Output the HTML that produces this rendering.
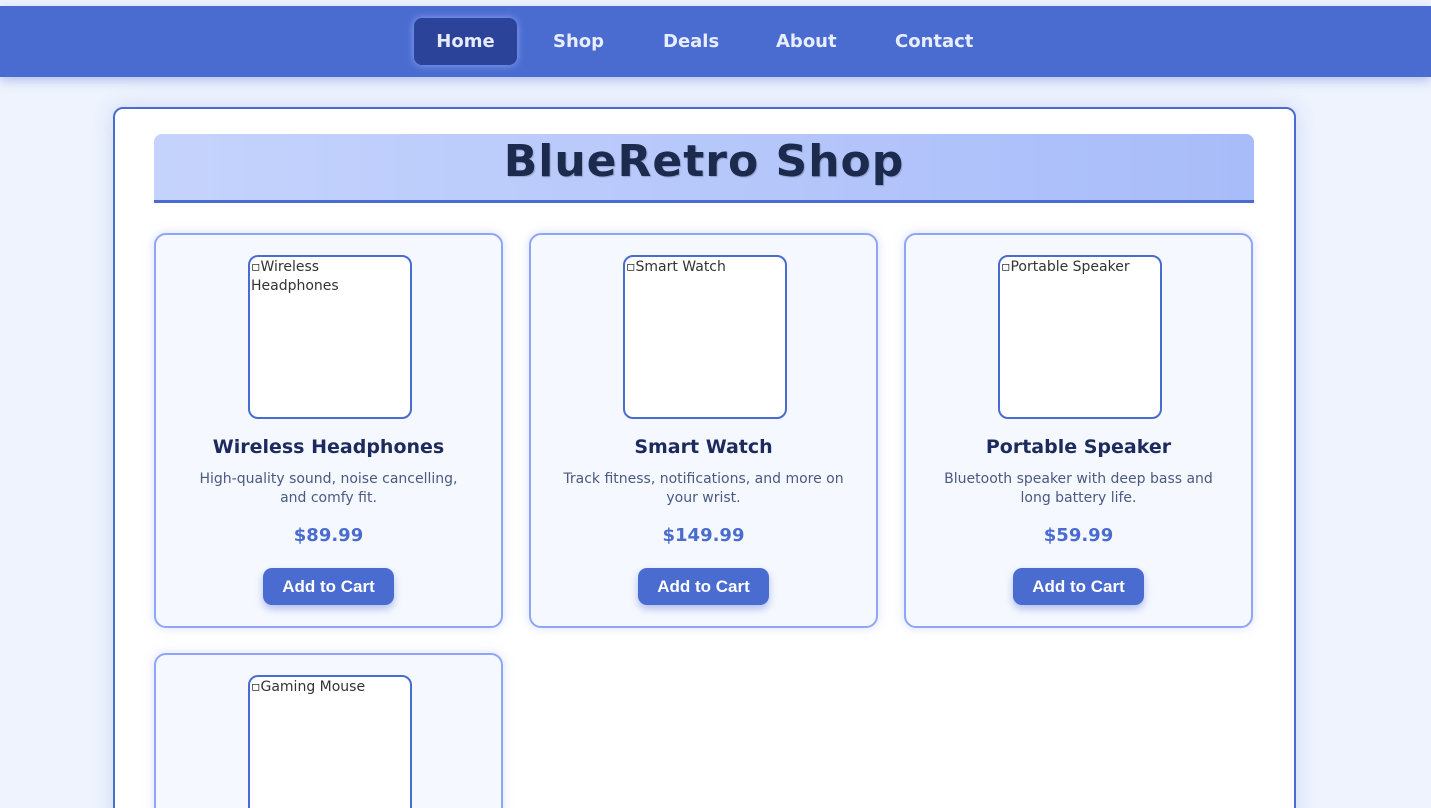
<!DOCTYPE html>
<html style="width:1431px;height:808px;overflow:hidden"><head><meta charset="utf-8"><style>
*{box-sizing:border-box;margin:0;padding:0}
body{width:1431px;height:808px;overflow:hidden;background:#eef3fd;font-family:"DejaVu Sans","Liberation Sans",sans-serif;position:relative}
.nav{position:absolute;top:6px;left:0;width:1431px;height:71px;background:#4a6cd0;box-shadow:0 4px 10px rgba(74,108,208,.35)}
.nav a{position:absolute;top:12px;height:47px;line-height:47px;color:#e8eeff;font-weight:bold;font-size:18px;text-decoration:none}
.nav .home{background:#2b4398;border-radius:8px;width:103px;left:414px;text-align:center;box-shadow:0 0 8px rgba(160,180,255,.8);color:#e6ebff}
.wrap{position:absolute;left:113px;top:107px;width:1183px;height:760px;background:#fff;border:2px solid #4a6cd0;border-radius:10px;box-shadow:0 0 20px rgba(74,108,208,.2)}
.hdr{position:absolute;left:39px;top:25px;width:1100px;height:69px;background:linear-gradient(90deg,#c5d3fc,#a8bcf9);border-bottom:3px solid #4a6cd0;border-radius:8px 8px 0 0;text-align:center;font-size:44px;font-weight:bold;color:#1c2a4e;line-height:55px;letter-spacing:1px;text-shadow:1px 1px 1px rgba(0,0,0,.2)}
.card{position:absolute;width:349px;height:395px;background:#f5f8ff;border:2px solid #8ea6f5;border-radius:12px;text-align:center;box-shadow:0 0 10px rgba(142,166,245,.35)}
.img{position:absolute;left:92px;top:20px;width:164px;height:164px;background:#fff;border:2px solid #4a6cd0;border-radius:10px;text-align:left;font-size:14px;color:#333;line-height:19px;padding:1px 0 0 1px}
.t{position:absolute;top:201px;width:100%;font-size:19px;font-weight:bold;color:#1c2a5e}
.d{position:absolute;top:235px;left:32px;right:32px;font-size:14px;color:#4a5a80;line-height:19px}
.p{position:absolute;top:290px;width:100%;font-size:18px;font-weight:bold;color:#4a6cd0}
.b{position:absolute;top:333px;left:107px;width:131px;height:37px;background:#4a6cd0;border-radius:9px;color:#fff;font-family:"Liberation Sans",sans-serif;font-weight:bold;font-size:17px;line-height:37px;box-shadow:0 4px 8px rgba(74,108,208,.4)}
</style></head><body>
<div class="nav">
<a class="home">Home</a>
<a style="left:553px">Shop</a>
<a style="left:663px">Deals</a>
<a style="left:776px">About</a>
<a style="left:895px">Contact</a>
</div>
<div class="wrap">
<div class="hdr">BlueRetro Shop</div>
</div>
<div class="card" style="left:154px;top:233px"><div class="img">▫Wireless Headphones</div><div class="t">Wireless Headphones</div><div class="d">High-quality sound, noise cancelling, and comfy fit.</div><div class="p">$89.99</div><div class="b">Add to Cart</div></div>
<div class="card" style="left:529px;top:233px"><div class="img">▫Smart Watch</div><div class="t">Smart Watch</div><div class="d">Track fitness, notifications, and more on your wrist.</div><div class="p">$149.99</div><div class="b">Add to Cart</div></div>
<div class="card" style="left:904px;top:233px"><div class="img">▫Portable Speaker</div><div class="t">Portable Speaker</div><div class="d">Bluetooth speaker with deep bass and long battery life.</div><div class="p">$59.99</div><div class="b">Add to Cart</div></div>
<div class="card" style="left:154px;top:653px"><div class="img">▫Gaming Mouse</div></div>
</body></html>
